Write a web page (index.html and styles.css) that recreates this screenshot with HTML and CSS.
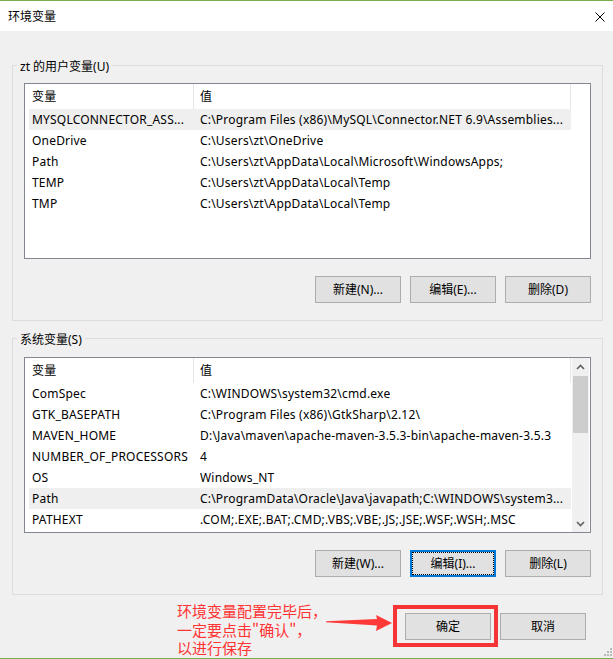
FILE: index.html
```html
<!DOCTYPE html>
<html lang="zh-CN">
<head>
<meta charset="utf-8">
<title>环境变量</title>
<link rel="stylesheet" href="styles.css">
</head>
<body>
<div class="window">
  <div class="titlebar">
    <span class="title">环境变量</span>
    <svg class="close" width="10" height="10" viewBox="0 0 10 10"><path d="M0.5 0.5 L9.5 9.5 M9.5 0.5 L0.5 9.5" stroke="#000" stroke-width="1" fill="none"/></svg>
  </div>
  <div class="content">
    <section class="group">
      <div class="legend">zt 的用户变量(U)</div>
      <div class="list">
        <div class="table">
          <div class="head"><div class="hc hc1">变量</div><div class="hc hc2">值</div></div>
          <div class="row sel"><div class="c1">MYSQLCONNECTOR_ASS...</div><div class="c2">C:\Program Files (x86)\MySQL\Connector.NET 6.9\Assemblies...</div></div>
          <div class="row"><div class="c1">OneDrive</div><div class="c2">C:\Users\zt\OneDrive</div></div>
          <div class="row"><div class="c1">Path</div><div class="c2">C:\Users\zt\AppData\Local\Microsoft\WindowsApps;</div></div>
          <div class="row"><div class="c1">TEMP</div><div class="c2">C:\Users\zt\AppData\Local\Temp</div></div>
          <div class="row"><div class="c1">TMP</div><div class="c2">C:\Users\zt\AppData\Local\Temp</div></div>
        </div>
      </div>
      <div class="buttons">
        <button class="btn">新建(N)...</button>
        <button class="btn">编辑(E)...</button>
        <button class="btn">删除(D)</button>
      </div>
    </section>
    <section class="group group2">
      <div class="legend">系统变量(S)</div>
      <div class="list">
        <div class="table">
          <div class="head"><div class="hc hc1">变量</div><div class="hc hc2">值</div></div>
          <div class="row"><div class="c1">ComSpec</div><div class="c2">C:\WINDOWS\system32\cmd.exe</div></div>
          <div class="row"><div class="c1">GTK_BASEPATH</div><div class="c2">C:\Program Files (x86)\GtkSharp\2.12\</div></div>
          <div class="row"><div class="c1">MAVEN_HOME</div><div class="c2">D:\Java\maven\apache-maven-3.5.3-bin\apache-maven-3.5.3</div></div>
          <div class="row"><div class="c1">NUMBER_OF_PROCESSORS</div><div class="c2">4</div></div>
          <div class="row"><div class="c1">OS</div><div class="c2">Windows_NT</div></div>
          <div class="row sel"><div class="c1">Path</div><div class="c2">C:\ProgramData\Oracle\Java\javapath;C:\WINDOWS\system3...</div></div>
          <div class="row"><div class="c1">PATHEXT</div><div class="c2">.COM;.EXE;.BAT;.CMD;.VBS;.VBE;.JS;.JSE;.WSF;.WSH;.MSC</div></div>
        </div>
        <div class="scrollbar">
          <div class="sb-btn"><svg width="9" height="6" viewBox="0 0 9 6"><path d="M1 5 L4.5 1.5 L8 5" stroke="#606060" stroke-width="1.6" fill="none"/></svg></div>
          <div class="sb-track"><div class="sb-thumb"></div></div>
          <div class="sb-btn"><svg width="9" height="6" viewBox="0 0 9 6"><path d="M1 1 L4.5 4.5 L8 1" stroke="#606060" stroke-width="1.6" fill="none"/></svg></div>
        </div>
      </div>
      <div class="buttons">
        <button class="btn">新建(W)...</button>
        <button class="btn focus">编辑(I)...</button>
        <button class="btn">删除(L)</button>
      </div>
    </section>
  </div>
  <div class="footer">
    <div class="note">环境变量配置完毕后，<br>一定要点击"确认"，<br>以进行保存</div>
    <svg class="arrow" width="75" height="24" viewBox="0 0 75 24"><path d="M6 10.2 L57 8 L56 4 L72 12 L56 20 L57 14.5 L6 11.2 Z" fill="#ff3838"/></svg>
    <div class="ok-wrap"><button class="btn">确定</button></div>
    <button class="btn">取消</button>
  </div>
  <svg class="grip" width="9" height="9" viewBox="0 0 9 9" fill="#b9b9b9"><rect x="7" y="1" width="2" height="2"/><rect x="4" y="4" width="2" height="2"/><rect x="7" y="4" width="2" height="2"/><rect x="1" y="7" width="2" height="2"/><rect x="4" y="7" width="2" height="2"/><rect x="7" y="7" width="2" height="2"/></svg>
</div>
</body>
</html>
```
FILE: styles.css
```css
* { box-sizing: border-box; }
html, body { margin: 0; padding: 0; }
body {
  background: #f0f0f0;
  font-family: "Noto Sans", "Noto Sans CJK SC", sans-serif;
  font-size: 12px;
  color: #000;
}
.window {
  position: relative;
  width: 613px;
  height: 659px;
  background: #f0f0f0;
  border-bottom: 1px solid #7aae4a;
}
.titlebar {
  height: 31px;
  background: #fff;
  border-top: 1px solid #7aae4a;
  display: flex;
  align-items: center;
  justify-content: space-between;
  padding: 1px 8px 0 8px;
}
.title { line-height: 16px; padding-top: 1px; }
.close { display: block; }
.content {
  padding: 34px 10px 0 12px;
  display: flex;
  flex-direction: column;
  gap: 17px;
}
.group {
  border: 1px solid #dcdcdc;
  padding: 0 11px 17px 11px;
}
.legend {
  width: max-content;
  margin: -9px 0 8px -7px;
  padding: 2px 3px 0 3px;
  line-height: 16px;
  height: 18px;
  background: #f0f0f0;
}
.group2 .legend { margin-bottom: 9px; }
.list {
  height: 176px;
  border: 1px solid #828790;
  background: #fff;
  display: flex;
  overflow: hidden;
}
.table { width: 546px; flex: none; letter-spacing: 0.2px; }
.head {
  display: flex;
  height: 25px;
  line-height: 24px;
}
.hc { border-right: 1px solid #e5e5e5; padding-top: 1px; }
.hc1 { width: 169px; padding-left: 7px; }
.hc2 { width: 377px; padding-left: 6px; }
.row {
  display: flex;
  height: 21px;
  line-height: 20px;
  margin-left: 4px;
  white-space: nowrap;
}
.row.sel { background: #efefef; }
.c1, .c2 { padding-top: 1px; overflow: hidden; }
.c1 { width: 165px; padding-left: 3px; }
.c2 { width: 377px; padding-left: 6px; }
.scrollbar {
  width: 17px;
  margin-left: auto;
  margin-right: 1px;
  background: #f0f0f0;
  display: flex;
  flex-direction: column;
}
.sb-btn {
  height: 17px;
  display: flex;
  align-items: center;
  justify-content: center;
  flex: none;
}
.sb-btn svg { display: block; }
.sb-track { flex: 1; padding-top: 1px; }
.sb-thumb {
  height: 57px;
  margin: 0 1px;
  background: #cdcdcd;
}
.buttons {
  display: flex;
  justify-content: flex-end;
  gap: 9px;
  margin-top: 17px;
}
.btn {
  width: 86px;
  height: 27px;
  padding: 1px 0 0 0;
  border: 1px solid #adadad;
  background: #e1e1e1;
  font-family: "Noto Sans", "Noto Sans CJK SC", sans-serif;
  font-size: 12px;
  color: #000;
  line-height: 16px;
}
.btn.focus {
  border: 2px solid #0078d7;
  outline: 1px dotted #000;
  outline-offset: -3px;
}
.footer {
  position: relative;
  display: flex;
  justify-content: flex-end;
  gap: 9px;
  margin-top: 18px;
  padding-right: 27px;
}
.ok-wrap { position: relative; }
.ok-wrap .btn { display: block; }
.ok-wrap::after {
  content: "";
  position: absolute;
  left: -12px;
  top: -8px;
  right: -7px;
  bottom: -7px;
  border: 4px solid #f53535;
}
.note {
  position: absolute;
  left: 177px;
  top: -11px;
  font-family: "Noto Sans CJK SC", sans-serif;
  font-size: 15px;
  line-height: 18.5px;
  color: #ff3333;
  white-space: nowrap;
}
.arrow {
  position: absolute;
  left: 320px;
  top: -2px;
}
.grip {
  position: absolute;
  right: 1px;
  bottom: 2px;
}
```
